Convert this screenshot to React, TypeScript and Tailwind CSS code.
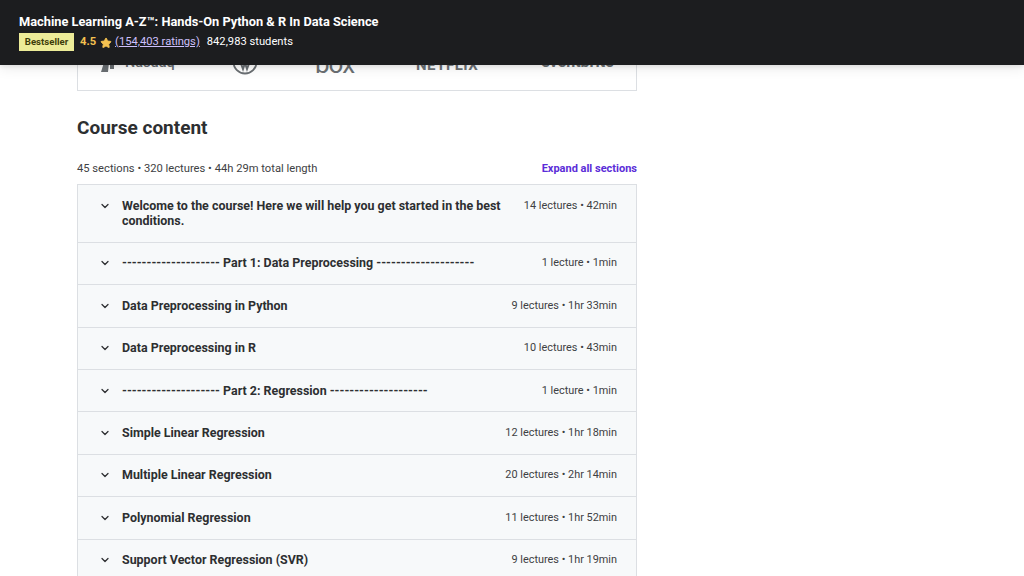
import { ChevronDown, Star } from 'lucide-react';

const sections = [
  { title: 'Welcome to the course! Here we will help you get started in the best conditions.', info: '14 lectures • 42min' },
  { title: '-------------------- Part 1: Data Preprocessing --------------------', info: '1 lecture • 1min' },
  { title: 'Data Preprocessing in Python', info: '9 lectures • 1hr 33min' },
  { title: 'Data Preprocessing in R', info: '10 lectures • 43min' },
  { title: '-------------------- Part 2: Regression --------------------', info: '1 lecture • 1min' },
  { title: 'Simple Linear Regression', info: '12 lectures • 1hr 18min' },
  { title: 'Multiple Linear Regression', info: '20 lectures • 2hr 14min' },
  { title: 'Polynomial Regression', info: '11 lectures • 1hr 52min' },
  { title: 'Support Vector Regression (SVR)', info: '9 lectures • 1hr 19min' },
];

function Logos() {
  return (
    <div className="h-[61px] border border-[#dcdfe3] border-t-0 flex items-start pt-[20px] text-[#6a6f73]">
      <div className="w-[154px] pl-[22px] flex items-start gap-[3px]">
        <svg width="22" height="22" viewBox="0 0 22 22" className="shrink-0">
          <path d="M1 22 L7 3 L10 3 L8 22 Z M10 12 L14 12 L14 19 L10 19 Z" fill="currentColor" />
        </svg>
        <span className="mt-[3px] text-[14.5px] leading-[20px] font-medium">Nasdaq</span>
      </div>
      <svg width="26" height="26" viewBox="0 0 26 26" className="-mt-[1px]">
        <circle cx="13" cy="13" r="11.5" fill="none" stroke="currentColor" strokeWidth="1.8" />
        <path d="M7 9 L11 20 L13 14 L15 20 L19 9" fill="none" stroke="currentColor" strokeWidth="2" />
      </svg>
      <span className="ml-[57px] w-[101px] -mt-[2px] text-[26px] leading-[32px] tracking-[-1px]">box</span>
      <span className="w-[125px] mt-[4px] text-[15px] leading-[22px] font-bold tracking-[0.5px]">NETFLIX</span>
      <span className="mt-[1px] text-[16px] leading-[22px] font-bold">eventbrite</span>
    </div>
  );
}

export default function App() {
  return (
    <div className="relative h-[576px] overflow-hidden bg-white font-['Roboto',sans-serif] text-[#2d2f31]">
      <div className="absolute top-0 left-0 right-0 z-10 h-[65px] bg-[#1c1d1f] pl-[19px] pt-[13px] shadow-[0_2px_4px_rgba(0,0,0,0.08),0_4px_12px_rgba(0,0,0,0.08)]">
        <div className="text-[12.8px] leading-[17px] font-bold text-white">
          Machine Learning A-Z™: Hands-On Python &amp; R In Data Science
        </div>
        <div className="mt-[3px] flex items-center text-[11.2px] text-white">
          <span className="bg-[#eceb98] text-[#3d3c0a] font-bold text-[9.6px] leading-[18px] h-[18px] w-[55px] text-center">
            Bestseller
          </span>
          <span className="ml-[6px] text-[#f4c150] font-bold leading-[16px]">4.5</span>
          <Star className="ml-[4px] mt-[1px] w-[12px] h-[12px] text-[#f4c150] fill-[#f4c150]" />
          <span className="ml-[3px] text-[#cec0fc] underline leading-[16px]">(154,403 ratings)</span>
          <span className="ml-[7px] leading-[16px]">842,983 students</span>
        </div>
      </div>

      <div className="ml-[77px] w-[560px] pt-[30px]">
        <Logos />
        <h2 className="mt-[23px] text-[19px] leading-[28px] font-bold">Course content</h2>
        <div className="mt-[19px] flex justify-between items-center text-[11.2px] leading-[16px]">
          <span className="text-[#3e4143]">45 sections • 320 lectures • 44h 29m total length</span>
          <span className="text-[11px] font-bold text-[#5b2dd8]">Expand all sections</span>
        </div>
        <div className="mt-[7px] border border-[#dcdfe3] border-b-0">
          {sections.map(s => (
            <div key={s.title} className="flex items-start bg-[#f7f9fa] border-b border-[#dcdfe3] pl-[21px] pr-[19px] pt-[12.5px] pb-[13.4px]">
              <ChevronDown className="w-[12px] h-[12px] mt-[2px] shrink-0 text-[#2d2f31]" strokeWidth={2.5} />
              <div className="ml-[11px] w-[384px] text-[12.45px] leading-[15.5px] font-bold">{s.title}</div>
              <div className="ml-auto text-[10.9px] leading-[15.5px] text-[#3e4143] whitespace-nowrap">{s.info}</div>
            </div>
          ))}
        </div>
      </div>
    </div>
  );
}
